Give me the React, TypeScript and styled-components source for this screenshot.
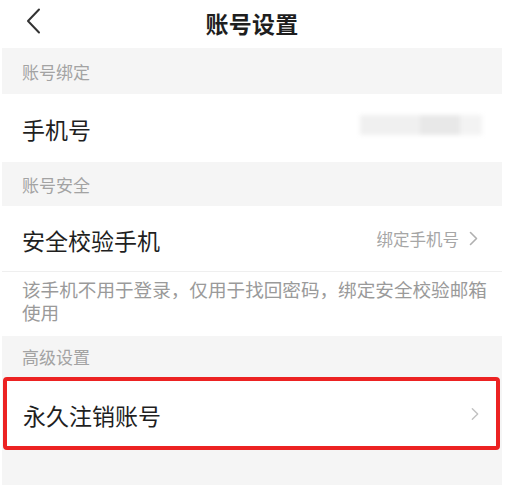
import React from "react";
import styled, { createGlobalStyle } from "styled-components";

const Global = createGlobalStyle`
  html, body { margin: 0; padding: 0; background: #ffffff; }
  body { font-family: "Noto Sans CJK SC", "Noto Sans", sans-serif; }
`;

const Page = styled.div`
  width: 506px;
  height: 485px;
  box-sizing: border-box;
  padding: 0 4px 0 2px;
  background: #ffffff;
  display: flex;
  flex-direction: column;
  overflow: hidden;
`;

const NavBar = styled.div`
  height: 48px;
  flex: none;
  display: grid;
  grid-template-columns: 60px 1fr 60px;
  align-items: center;
  background: #ffffff;
`;

const BackButton = styled.div`
  padding-left: 24px;
  display: flex;
  align-items: center;
  height: 48px;
`;

const Title = styled.div`
  text-align: center;
  font-size: 23px;
  font-weight: 700;
  color: #1e1e1e;
  letter-spacing: 0.3px;
  margin-top: -2px;
`;

const Body = styled.div`
  flex: 1;
  display: flex;
  flex-direction: column;
  background: #f5f5f5;
`;

const SectionHeader = styled.div<{ $h: number }>`
  height: ${(p) => p.$h}px;
  flex: none;
  display: flex;
  align-items: center;
  padding-left: 20px;
  font-size: 17px;
  color: #a3a3a3;
  background: #f5f5f5;
`;

const Row = styled.div<{ $h: number; $divider?: boolean }>`
  height: ${(p) => p.$h}px;
  flex: none;
  box-sizing: border-box;
  display: flex;
  align-items: center;
  justify-content: space-between;
  padding: 0 24px 0 20px;
  background: #ffffff;
  border-bottom: ${(p) => (p.$divider ? "1px solid #efefef" : "none")};
`;

const HighlightRow = styled(Row)`
  margin: 0 2px 0 1px;
  border: 4px solid #ec2222;
  border-radius: 4px;
  padding: 0 17px 0 16px;
`;

const Label = styled.div`
  font-size: 23px;
  color: #1f1f1f;
  padding-top: 2px;
`;

const Value = styled.div`
  display: flex;
  align-items: center;
  gap: 10px;
  font-size: 16.5px;
  color: #a6a6a6;
`;

const Note = styled.div`
  height: 64px;
  flex: none;
  box-sizing: border-box;
  background: #ffffff;
  padding: 5px 8px 0 20px;
  font-size: 18.6px;
  line-height: 23px;
  color: #9a9a9a;
`;

const Blur = styled.div`
  display: flex;
  align-items: center;
  filter: blur(2px);
  margin-right: -4px;
  margin-top: -6px;
`;

const BlurBlock = styled.div<{ $w: number; $c: string }>`
  width: ${(p) => p.$w}px;
  height: 20px;
  background: ${(p) => p.$c};
`;

const Chevron = ({ color, w = 9, h = 15 }: { color: string; w?: number; h?: number }) => (
  <svg width={w} height={h} viewBox="0 0 9 15" fill="none">
    <path d="M1.5 1.5 L7.5 7.5 L1.5 13.5" stroke={color} strokeWidth="1.6" strokeLinecap="round" strokeLinejoin="round" />
  </svg>
);

export default function App() {
  return (
    <>
      <Global />
      <Page>
        <NavBar>
          <BackButton>
            <svg width="16" height="26" viewBox="0 0 16 26" fill="none" style={{ marginTop: -6 }}>
              <path d="M13 1.5 L2 13 L13 24.5" stroke="#333333" strokeWidth="2" strokeLinecap="round" strokeLinejoin="round" />
            </svg>
          </BackButton>
          <Title>账号设置</Title>
          <div />
        </NavBar>
        <Body>
          <SectionHeader $h={46}>账号绑定</SectionHeader>
          <Row $h={68}>
            <Label>手机号</Label>
            <Blur>
              <BlurBlock $w={60} $c="#f0f0f0" />
              <BlurBlock $w={40} $c="#e8e8e8" />
              <BlurBlock $w={22} $c="#f3f3f3" />
            </Blur>
          </Row>
          <SectionHeader $h={44}>账号安全</SectionHeader>
          <Row $h={66} $divider>
            <Label>安全校验手机</Label>
            <Value>
              绑定手机号
              <Chevron color="#b0b0b0" />
            </Value>
          </Row>
          <Note>该手机不用于登录，仅用于找回密码，绑定安全校验邮箱使用</Note>
          <SectionHeader $h={41}>高级设置</SectionHeader>
          <HighlightRow $h={73}>
            <Label>永久注销账号</Label>
            <Chevron color="#c2c2c2" w={8} h={14} />
          </HighlightRow>
        </Body>
      </Page>
    </>
  );
}
